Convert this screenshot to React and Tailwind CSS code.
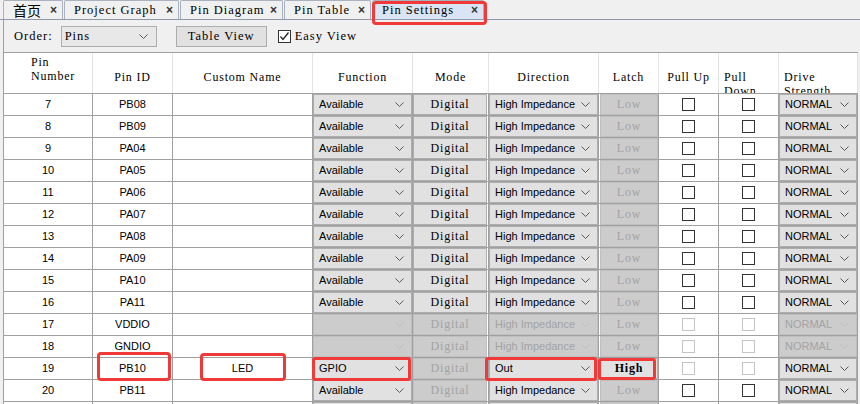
import React from "react";

const cols = [
  "w-[89px]",
  "w-[80px]",
  "w-[140px]",
  "w-[100px]",
  "w-[76px]",
  "w-[110px]",
  "w-[60px]",
  "w-[60px]",
  "w-[60px]",
  "w-[79px]",
];

// SimSun-like latin: serif face, slightly spread
const serif = { fontFamily: '"Liberation Serif", "Times New Roman", serif' };

const rows = [
  { n: 7, id: "PB08" },
  { n: 8, id: "PB09" },
  { n: 9, id: "PA04" },
  { n: 10, id: "PA05" },
  { n: 11, id: "PA06" },
  { n: 12, id: "PA07" },
  { n: 13, id: "PA08" },
  { n: 14, id: "PA09" },
  { n: 15, id: "PA10" },
  { n: 16, id: "PA11" },
  { n: 17, id: "VDDIO", power: true },
  { n: 18, id: "GNDIO", power: true },
  { n: 19, id: "PB10", gpio: true },
  { n: 20, id: "PB11", modeOff: true },
  { n: 21, id: "PB12", modeOff: true },
];

function Chevron({ off }) {
  return (
    <svg width="9" height="6" viewBox="0 0 9 6" className="shrink-0">
      <polyline
        points="0.5,0.5 4.5,4.5 8.5,0.5"
        fill="none"
        stroke={off ? "#bdbdbd" : "#5a5a5a"}
        strokeWidth="1"
      />
    </svg>
  );
}

function Combo({ value, off }) {
  return (
    <div
      className={`h-full w-full flex items-center justify-between pl-[5px] pr-[7px] border ${
        off
          ? "bg-[#cccccc] border-[#bfbfbf] text-[#a3a3a3]"
          : "bg-[#e1e1e1] border-[#adadad] text-black"
      }`}
    >
      <span>{value}</span>
      <Chevron off={off} />
    </div>
  );
}

function Btn({ label, off, className = "" }) {
  return (
    <div
      style={serif}
      className={`h-full w-full flex items-center justify-center pb-[2px] border text-[12px] tracking-[0.8px] ${
        off
          ? "bg-[#cccccc] border-[#bfbfbf] text-[#a3a3a3]"
          : "bg-[#e1e1e1] border-[#adadad] text-black"
      } ${className}`}
    >
      {label}
    </div>
  );
}

function Check({ off }) {
  return (
    <div
      className={`w-[13px] h-[13px] bg-white border ${
        off ? "border-[#c4c4c4]" : "border-[#333333]"
      }`}
    />
  );
}

function Cell({ i, children, pad = "" }) {
  return (
    <div
      className={`${cols[i]} shrink-0 h-full border-r border-[#a0a0a0] flex items-center justify-center ${pad}`}
    >
      {children}
    </div>
  );
}

function Row({ r }) {
  const off = r.power;
  return (
    <div className="flex h-[22px] border-b border-[#a0a0a0] bg-white">
      <Cell i={0}>{r.n}</Cell>
      <Cell i={1}>{r.id}</Cell>
      <Cell i={2}>{r.gpio ? "LED" : ""}</Cell>
      <Cell i={3}>
        <Combo value={r.power ? "" : r.gpio ? "GPIO" : "Available"} off={off} />
      </Cell>
      <Cell i={4} pad="pr-px">
        <Btn label="Digital" off={off || r.gpio || r.modeOff} />
      </Cell>
      <Cell i={5}>
        <Combo value={r.gpio ? "Out" : "High Impedance"} off={off} />
      </Cell>
      <Cell i={6} pad="pl-px">
        <Btn label={r.gpio ? "High" : "Low"} off={!r.gpio} className={r.gpio ? "font-bold" : ""} />
      </Cell>
      <Cell i={7}>
        <Check off={off || r.gpio} />
      </Cell>
      <Cell i={8}>
        <Check off={off || r.gpio} />
      </Cell>
      <Cell i={9}>
        <Combo value="NORMAL" off={off} />
      </Cell>
    </div>
  );
}

const headers = [
  { t: ["Pin", "Number"], cls: "justify-start pl-[27px] pt-[2px]" },
  { t: ["Pin ID"], cls: "justify-center pt-[17px]" },
  { t: ["Custom Name"], cls: "justify-center pt-[17px]" },
  { t: ["Function"], cls: "justify-center pt-[17px]" },
  { t: ["Mode"], cls: "justify-center pt-[17px]" },
  { t: ["Direction"], cls: "justify-center pt-[17px]" },
  { t: ["Latch"], cls: "justify-center pt-[17px]" },
  { t: ["Pull Up"], cls: "justify-center pt-[17px]" },
  { t: ["Pull", "Down"], cls: "justify-start pl-[5px] pt-[17px]" },
  { t: ["Drive", "Strength"], cls: "justify-start pl-[5px] pt-[17px]" },
];

const tabs = [
  { label: "首页", w: "w-[60px]", cjk: true },
  { label: "Project Graph", w: "w-[115px]" },
  { label: "Pin Diagram", w: "w-[103px]" },
  { label: "Pin Table", w: "w-[87px]" },
  { label: "Pin Settings", w: "w-[112px]", active: true },
];

export default function App() {
  return (
    <div
      className="relative w-[860px] h-[404px] overflow-hidden bg-[#f0f0f0] text-[11px] text-black"
      style={{ fontFamily: '"Liberation Sans", Arial, sans-serif' }}
    >
      {/* tab strip */}
      <div className="flex items-end gap-px h-[20px] pl-[3px] border-b border-[#8e9aab]">
        {tabs.map((t) => (
          <div
            key={t.label}
            className={`${t.w} h-[19px] flex items-center justify-between pl-[9px] pr-[5px] border border-b-0 border-[#a9b2bf] rounded-t-[2px] ${
              t.active ? "bg-[#d9e5f4]" : "bg-[#f0f0f0]"
            }`}
          >
            <span
              className={t.cjk ? "text-[14px]" : "text-[12.5px] tracking-[1px]"}
              style={t.cjk ? { fontFamily: '"Noto Sans CJK SC", sans-serif' } : serif}
            >
              {t.label}
            </span>
            <span className="text-[12px] font-bold text-[#333]">×</span>
          </div>
        ))}
      </div>

      {/* panel */}
      <div className="ml-[3px] border-l border-[#a0a0a0] w-[855px]">
        <div className="flex items-center h-[32px] pl-[10px] pt-px">
          <span style={serif} className="text-[12.5px] tracking-[1px] mr-[8px]">
            Order:
          </span>
          <div className="w-[96px] h-[21px] flex items-center justify-between pl-[3px] pr-[8px] border border-[#adadad] bg-[#e8e8e8]">
            <span style={serif} className="text-[12.5px] tracking-[1px]">
              Pins
            </span>
            <Chevron />
          </div>
          <div
            style={serif}
            className="ml-[19px] w-[91px] h-[21px] flex items-center justify-center border border-[#adadad] bg-[#e1e1e1] text-[12.5px] tracking-[1px]"
          >
            Table View
          </div>
          <div className="ml-[11px] w-[13px] h-[13px] border border-[#333] bg-white flex items-center justify-center">
            <svg width="11" height="11" viewBox="0 0 11 11">
              <polyline points="1.5,5.5 4,8.5 9.5,1.5" fill="none" stroke="#222" strokeWidth="1.3" />
            </svg>
          </div>
          <span style={serif} className="ml-[4px] text-[12.5px] tracking-[1px]">
            Easy View
          </span>
        </div>

        {/* table */}
        <div className="border-t border-[#a0a0a0]">
          <div className="flex h-[41px] bg-white border-b border-[#a0a0a0]">
            {headers.map((h, i) => (
              <div
                key={i}
                style={serif}
                className={`${cols[i]} shrink-0 h-full overflow-hidden border-r border-[#e3e3e3] flex ${h.cls} text-[12px] tracking-[0.8px] leading-[14px]`}
              >
                <div className={h.t.length > 1 ? "text-left" : ""}>
                  {h.t.map((l) => (
                    <div key={l} className="whitespace-pre">
                      {l}
                    </div>
                  ))}
                </div>
              </div>
            ))}
          </div>
          {rows.map((r) => (
            <Row key={r.n} r={r} />
          ))}
        </div>
      </div>

      {/* red annotation outlines */}
      <div className="absolute left-[372px] top-[1px] w-[115px] h-[24px] border-[3px] border-[#f03a3a] rounded-[4px]" />
      <div className="absolute left-[97px] top-[352px] w-[74px] h-[29px] border-[3px] border-[#f03a3a] rounded-[4px]" />
      <div className="absolute left-[200px] top-[353px] w-[86px] h-[28px] border-[3px] border-[#f03a3a] rounded-[4px]" />
      <div className="absolute left-[312px] top-[357px] w-[99px] h-[24px] border-[3px] border-[#f03a3a] rounded-[3px]" />
      <div className="absolute left-[485px] top-[357px] w-[112px] h-[24px] border-[3px] border-[#f03a3a] rounded-[3px]" />
      <div className="absolute left-[598px] top-[358px] w-[58px] h-[22px] border-[3px] border-[#f03a3a] rounded-[3px]" />
    </div>
  );
}
